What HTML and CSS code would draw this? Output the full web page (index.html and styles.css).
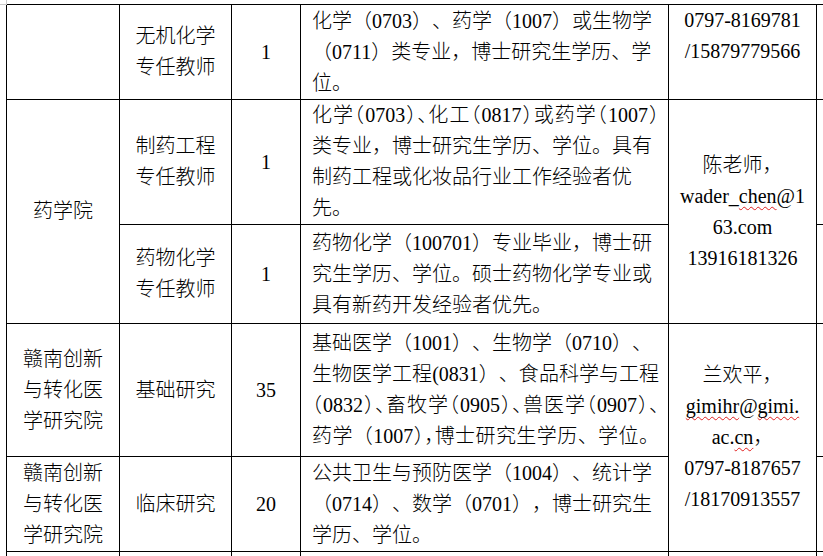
FILE: index.html
```html
<!DOCTYPE html>
<html lang="zh-CN">
<head>
<meta charset="utf-8">
<title>招聘岗位</title>
<link rel="stylesheet" href="styles.css">
</head>
<body>
<span class="corner"></span>
<table class="jobs">
  <colgroup>
    <col class="c-unit">
    <col class="c-post">
    <col class="c-num">
    <col class="c-req">
    <col class="c-contact">
    <col class="c-extra">
  </colgroup>
  <tbody>
    <tr class="r1">
      <td class="unit"></td>
      <td class="post">无机化学<br>专任教师</td>
      <td class="num">1</td>
      <td class="req">
        <span class="ln">化学（0703）、药学（1007）或生物学</span>
        <span class="ln">（0711）类专业，博士研究生学历、学</span>
        <span class="ln">位。</span>
      </td>
      <td class="contact top">0797-8169781<br>/15879779566</td>
      <td class="extra"></td>
    </tr>
    <tr class="r2">
      <td class="unit" rowspan="2">药学院</td>
      <td class="post">制药工程<br>专任教师</td>
      <td class="num">1</td>
      <td class="req">
        <span class="ln fill h">化学（0703）、化工（0817）或药学（1007）</span>
        <span class="ln">类专业，博士研究生学历、学位。具有</span>
        <span class="ln">制药工程或化妆品行业工作经验者优</span>
        <span class="ln">先。</span>
      </td>
      <td class="contact" rowspan="2">陈老师，<br>wader_<span class="sp">chen</span>@1<br>63.com<br>13916181326</td>
      <td class="extra"></td>
    </tr>
    <tr class="r3">
      <td class="post">药物化学<br>专任教师</td>
      <td class="num">1</td>
      <td class="req">
        <span class="ln">药物化学（100701）专业毕业，博士研</span>
        <span class="ln">究生学历、学位。硕士药物化学专业或</span>
        <span class="ln">具有新药开发经验者优先。</span>
      </td>
      <td class="extra"></td>
    </tr>
    <tr class="r4">
      <td class="unit">赣南创新<br>与转化医<br>学研究院</td>
      <td class="post">基础研究</td>
      <td class="num">35</td>
      <td class="req">
        <span class="ln">基础医学（1001）、生物学（0710）、</span>
        <span class="ln fill">生物医学工程(0831）、食品科学与工程</span>
        <span class="ln fill h">（0832）、畜牧学（0905）、兽医学（0907）、</span>
        <span class="ln fill">药学（1007<span class="h">），</span>博士研究生学历、学位。</span>
      </td>
      <td class="contact" rowspan="2">兰欢平，<br><span class="sp">gimihr</span>@<span class="sp">gimi.</span><br>ac.<span class="sp">cn</span>，<br>0797-8187657<br>/18170913557</td>
      <td class="extra"></td>
    </tr>
    <tr class="r5">
      <td class="unit">赣南创新<br>与转化医<br>学研究院</td>
      <td class="post">临床研究</td>
      <td class="num">20</td>
      <td class="req">
        <span class="ln">公共卫生与预防医学（1004）、统计学</span>
        <span class="ln">（0714）、数学（0701），博士研究生</span>
        <span class="ln">学历、学位。</span>
      </td>
      <td class="extra"></td>
    </tr>
    <tr class="r6">
      <td class="unit"></td>
      <td class="post"></td>
      <td class="num"></td>
      <td class="req"></td>
      <td class="contact"></td>
      <td class="extra"></td>
    </tr>
  </tbody>
</table>
</body>
</html>
```
FILE: styles.css
```css
html, body {
  margin: 0;
  padding: 0;
  background: #fff;
  overflow: hidden;
}

body {
  width: 823px;
  height: 556px;
  position: relative;
  font-family: "Liberation Serif", "Noto Sans CJK SC", sans-serif;
  font-size: 20px;
  line-height: 31px;
  color: #000;
  text-spacing-trim: space-all;
}

.corner {
  position: absolute;
  left: 0;
  top: 0;
  width: 6px;
  height: 4px;
  border-right: 1px solid #c8c8c8;
  border-bottom: 1px solid #c8c8c8;
}

.jobs {
  border-collapse: collapse;
  table-layout: fixed;
  width: 910px;
  margin: 4px 0 0 6px;
}

.c-unit { width: 113px; }
.c-post { width: 112px; }
.c-num { width: 69px; }
.c-req { width: 368px; }
.c-contact { width: 148px; }
.c-extra { width: 100px; }

.jobs td {
  border: 1px solid #000;
  padding: 0 8px;
  vertical-align: middle;
  text-align: center;
  white-space: nowrap;
  font-weight: 300;
}

.r1 { height: 95px; }
.r2 { height: 125px; }
.r3 { height: 99px; }
.r4 { height: 133px; }
.r5 { height: 95px; }
.r6 { height: 60px; }

.jobs td.req {
  text-align: left;
  padding: 0 9px 0 11px;
}

.ln {
  display: block;
  white-space: nowrap;
}

.fill {
  text-align: justify;
  text-align-last: justify;
}

.h {
  font-feature-settings: "halt";
}

.jobs td.top {
  vertical-align: top;
}

.sp {
  text-decoration: underline wavy #e02020;
  text-decoration-thickness: 1px;
  text-decoration-skip-ink: none;
  text-underline-offset: 3px;
}
```
